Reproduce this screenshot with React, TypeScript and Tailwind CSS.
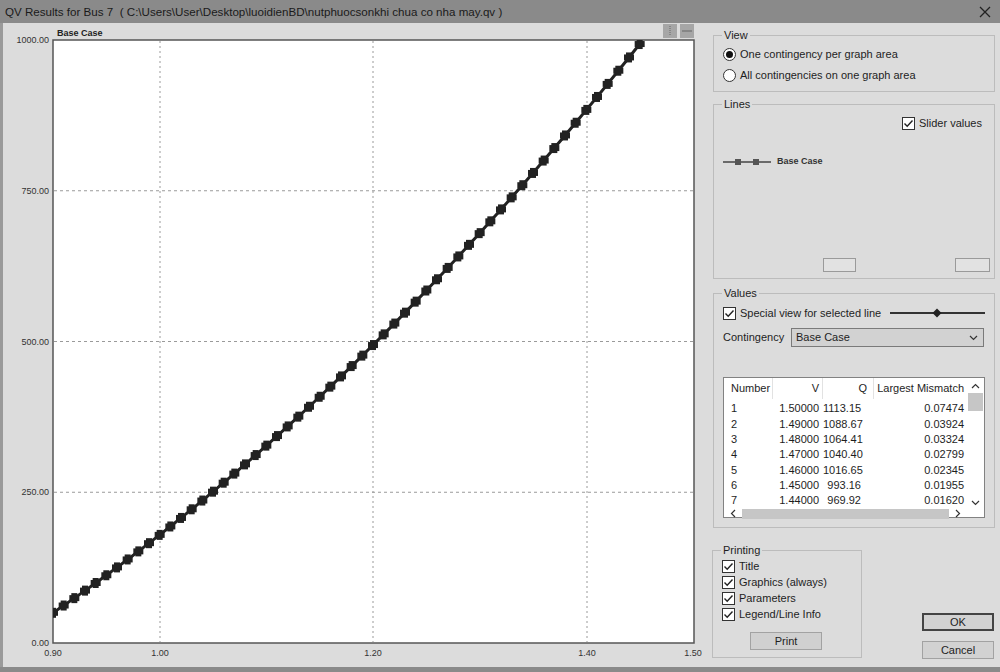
import React from 'react';

const font = { fontFamily: '"Liberation Sans", Arial, sans-serif' };

// plot box in page coords
const PL = 53;
const PR = 693;
const PT = 40;
const PB = 643;

const xOf = (v: number) => PL + ((v - 0.9) / 0.6) * (PR - PL);
const yOf = (q: number) => PB - (q / 1000) * (PB - PT);

const curve = Array.from({ length: 56 }, (_, i) => {
  const v = 0.9 + 0.01 * i;
  const q = 939.3 * v * v - 492.4 * v - 267.6;
  return { x: xOf(v), y: yOf(q) };
});

const rows = [
  ['1', '1.50000', '1113.15', '0.07474'],
  ['2', '1.49000', '1088.67', '0.03924'],
  ['3', '1.48000', '1064.41', '0.03324'],
  ['4', '1.47000', '1040.40', '0.02799'],
  ['5', '1.46000', '1016.65', '0.02345'],
  ['6', '1.45000', '993.16', '0.01955'],
  ['7', '1.44000', '969.92', '0.01620'],
];

function Check({ label }: { label: string }) {
  return (
    <div className="flex items-center h-[16px] gap-[4px]">
      <div className="w-[13px] h-[13px] border border-[#333] bg-white flex items-center justify-center">
        <svg width="11" height="11" viewBox="0 0 11 11">
          <path d="M1.5 5.5 L4.2 8.2 L9.5 2.5" fill="none" stroke="#222" strokeWidth="1.4" />
        </svg>
      </div>
      <span>{label}</span>
    </div>
  );
}

function Radio({ label, on }: { label: string; on?: boolean }) {
  return (
    <div className="flex items-center h-[14px] gap-[4px]">
      <div className="w-[13px] h-[13px] rounded-full border border-[#333] bg-white flex items-center justify-center">
        {on && <div className="w-[7px] h-[7px] rounded-full bg-[#111]" />}
      </div>
      <span>{label}</span>
    </div>
  );
}

function Group({ title, className, children }: { title: string; className: string; children: React.ReactNode }) {
  return (
    <div className={`relative border border-[#bcbcbc] ${className}`}>
      <span className="absolute -top-[8px] left-[8px] bg-[#dcdcdc] px-[2px] leading-[14px]">{title}</span>
      {children}
    </div>
  );
}

function Chart() {
  return (
    <svg width="713" height="644" viewBox="0 23 713 644" className="block">
      <rect x="0" y="23" width="3" height="644" fill="#9a9a9a" />
      <text x="57" y="36" fontSize="9" fontWeight="bold" fill="#222" style={font}>Base Case</text>
      <rect x="663" y="24" width="14" height="14" fill="#a6a6a6" />
      <line x1="670" y1="26" x2="670" y2="36" stroke="#666" strokeDasharray="1 1" />
      <rect x="680" y="24" width="14" height="14" fill="#a6a6a6" />
      <line x1="682" y1="31" x2="692" y2="31" stroke="#666" />
      <rect x={PL} y={PT} width={PR - PL + 1} height={PB - PT} fill="#fff" stroke="#555" strokeWidth="1.5" />
      {[160, 373, 587].map((x) => (
        <line key={x} x1={x} y1={PT + 1} x2={x} y2={PB - 1} stroke="#9a9a9a" strokeDasharray="2 3" />
      ))}
      {[190.75, 341.5, 492.25].map((y) => (
        <line key={y} x1={PL + 1} y1={y} x2={PR} y2={y} stroke="#9a9a9a" strokeDasharray="3 3" />
      ))}
      <clipPath id="plot">
        <rect x={PL} y={PT} width={PR - PL} height={PB - PT} />
      </clipPath>
      <g clipPath="url(#plot)">
        <polyline points={curve.map((p) => `${p.x},${p.y}`).join(' ')} fill="none" stroke="#222" strokeWidth="3" />
        {curve.map((p, i) => (
          <g key={i} fill="#222">
            <rect x={p.x - 5} y={p.y - 3} width="10" height="6" />
            <rect x={p.x - 3} y={p.y - 5} width="6" height="10" />
          </g>
        ))}
      </g>
      <g fontSize="9" fill="#333" style={font} textAnchor="end">
        {[['1000.00', 40], ['750.00', 190.75], ['500.00', 341.5], ['250.00', 492.25], ['0.00', 643]].map(([t, y]) => (
          <text key={t} x="49" y={Number(y) + 3}>{t}</text>
        ))}
      </g>
      <g fontSize="9" fill="#333" style={font} textAnchor="middle">
        {[['0.90', 53], ['1.00', 160], ['1.20', 373], ['1.40', 587], ['1.50', 693]].map(([t, x]) => (
          <text key={t} x={x} y="656">{t}</text>
        ))}
      </g>
    </svg>
  );
}

export default function App() {
  return (
    <div className="w-[1000px] h-[672px] bg-[#8a8a8a] flex flex-col overflow-hidden text-[11px] text-[#1e1e1e]" style={font}>
      <div className="h-[23px] flex items-center justify-between pl-[5px] pr-[9px] text-[11.6px] text-[#1a1a1a]">
        <span>QV Results for Bus 7&nbsp;&nbsp;( C:\Users\User\Desktop\luoidienBD\nutphuocsonkhi chua co nha may.qv )</span>
        <svg width="12" height="12" viewBox="0 0 12 12">
          <path d="M1 1 L11 11 M11 1 L1 11" stroke="#222" strokeWidth="1.3" />
        </svg>
      </div>

      <div className="h-[644px] bg-[#dcdcdc] flex">
        <Chart />

        <div className="w-[282px] pt-[12px] flex flex-col">
          <Group title="View" className="h-[57px] pt-[11px] pl-[9px] flex flex-col gap-[7px]">
            <Radio label="One contingency per graph area" on />
            <Radio label="All contingencies on one graph area" />
          </Group>

          <Group title="Lines" className="h-[175px] mt-[12px] flex flex-col">
            <div className="flex justify-end pr-[12px] pt-[10px]">
              <Check label="Slider values" />
            </div>
            <div className="flex items-center mt-[24px] pl-[9px] gap-[6px]">
              <svg width="48" height="8" viewBox="0 0 48 8">
                <line x1="0" y1="4" x2="48" y2="4" stroke="#444" strokeWidth="1.5" />
                <rect x="12" y="1" width="6" height="6" fill="#555" />
                <rect x="30" y="1" width="6" height="6" fill="#555" />
              </svg>
              <span className="text-[9px] font-bold text-[#333]">Base Case</span>
            </div>
            <div className="mt-auto mb-[6px] flex justify-between pl-[109px] pr-[4px]">
              <div className="w-[33px] h-[14px] border border-[#9a9a9a] bg-[#e2e2e2]" />
              <div className="w-[35px] h-[14px] border border-[#9a9a9a] bg-[#e2e2e2]" />
            </div>
          </Group>

          <Group title="Values" className="h-[235px] mt-[14px] pl-[9px] pr-[9px]">
            <div className="flex items-center pt-[11px]">
              <Check label="Special view for selected line" />
              <svg width="95" height="10" viewBox="0 0 95 10" className="ml-auto">
                <line x1="0" y1="5" x2="95" y2="5" stroke="#333" strokeWidth="2" />
                <path d="M47 0.5 L51.5 5 L47 9.5 L42.5 5 Z" fill="#222" />
              </svg>
            </div>
            <div className="flex items-center mt-[7px]">
              <span className="w-[68px]">Contingency</span>
              <div className="w-[193px] h-[19px] border border-[#7a7a7a] bg-[#d2d2d2] flex items-center pl-[4px] pr-[5px]">
                <span>Base Case</span>
                <svg width="9" height="6" viewBox="0 0 9 6" className="ml-auto">
                  <path d="M1 1 L4.5 4.5 L8 1" fill="none" stroke="#333" strokeWidth="1.2" />
                </svg>
              </div>
            </div>

            <div className="mt-[30px] w-[262px] h-[141px] border border-[#828282] bg-white grid grid-cols-[243px_17px] grid-rows-[1fr_11px]">
              <div>
                <div className="flex h-[21px] items-center">
                  <div className="w-[49px] h-full flex items-center pl-[7px] border-r border-[#e2e2e2]">Number</div>
                  <div className="w-[50px] h-full flex items-center justify-end pr-[3px] border-r border-[#e2e2e2]">V</div>
                  <div className="w-[51px] h-full flex items-center justify-end pr-[6px] border-r border-[#e2e2e2]">Q</div>
                  <div className="w-[93px] h-full flex items-center justify-end pr-[3px]">Largest Mismatch</div>
                </div>
                <div className="pt-[2px]">
                  {rows.map((r) => (
                    <div key={r[0]} className="flex h-[15.3px] items-center">
                      <div className="w-[49px] pl-[7px]">{r[0]}</div>
                      <div className="w-[50px] text-right pr-[4px]">{r[1]}</div>
                      <div className="w-[51px] text-right pr-[13px]">{r[2]}</div>
                      <div className="w-[93px] text-right pr-[3px]">{r[3]}</div>
                    </div>
                  ))}
                </div>
              </div>
              <div className="flex flex-col items-center pt-[5px] pb-[2px]">
                <svg width="9" height="6" viewBox="0 0 9 6">
                  <path d="M1 5 L4.5 1.5 L8 5" fill="none" stroke="#333" strokeWidth="1.2" />
                </svg>
                <div className="w-[15px] h-[18px] bg-[#c6c6c6] mt-[4px]" />
                <svg width="9" height="6" viewBox="0 0 9 6" className="mt-auto">
                  <path d="M1 1 L4.5 4.5 L8 1" fill="none" stroke="#333" strokeWidth="1.2" />
                </svg>
              </div>
              <div className="flex items-center pl-[6px] pr-[6px]">
                <svg width="6" height="9" viewBox="0 0 6 9">
                  <path d="M5 1 L1.5 4.5 L5 8" fill="none" stroke="#333" strokeWidth="1.2" />
                </svg>
                <div className="flex-1 h-[10px] bg-[#c6c6c6] mx-[6px]" />
                <svg width="6" height="9" viewBox="0 0 6 9">
                  <path d="M1 1 L4.5 4.5 L1 8" fill="none" stroke="#333" strokeWidth="1.2" />
                </svg>
              </div>
              <div />
            </div>
          </Group>

          <div className="flex mt-[22px]">
            <Group title="Printing" className="w-[150px] h-[108px] -ml-[1px] pt-[7px] pl-[9px]">
              <Check label="Title" />
              <Check label="Graphics (always)" />
              <Check label="Parameters" />
              <Check label="Legend/Line Info" />
              <div className="ml-[28px] mt-[10px] w-[72px] h-[18px] bg-[#d0d0d0] border border-[#a2a2a2] flex items-center justify-center">Print</div>
            </Group>
            <div className="ml-auto mr-[1px] flex flex-col gap-[10px] pt-[63px]">
              <div className="w-[72px] h-[18px] bg-[#d2d2d2] border-2 border-[#444] flex items-center justify-center">OK</div>
              <div className="w-[72px] h-[18px] bg-[#d2d2d2] border border-[#a2a2a2] flex items-center justify-center">Cancel</div>
            </div>
          </div>
        </div>
      </div>
    </div>
  );
}
